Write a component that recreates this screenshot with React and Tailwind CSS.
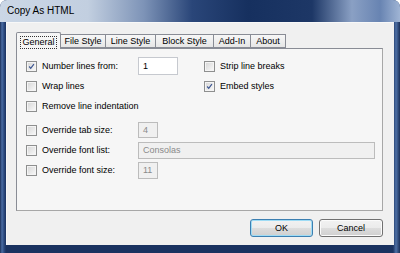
import React from 'react';

const font = { fontFamily: '"Liberation Sans", Arial, sans-serif' };

const Check = ({ checked }) => (
  <div className="w-[11px] h-[11px] shrink-0 border border-[#8e8f8f] bg-[#f4f4f4] p-px">
    <div className="w-full h-full bg-gradient-to-br from-[#d9d9d9] to-[#f6f6f6] flex items-center justify-center">
      {checked && (
        <svg width="9" height="9" viewBox="0 0 9 9">
          <path d="M1.5 4.5 L3.5 6.8 L7.6 1.5" fill="none" stroke="#3b5591" strokeWidth="1.5" />
        </svg>
      )}
    </div>
  </div>
);

const Option = ({ checked, label, className = '' }) => (
  <div className={`flex items-center gap-[5px] ${className}`}>
    <Check checked={checked} />
    <span className="text-[9px] leading-none text-black whitespace-nowrap">{label}</span>
  </div>
);

const Field = ({ value, className, disabled }) => (
  <div
    className={`flex items-center px-[4px] text-[9px] leading-none border ${
      disabled ? 'border-[#bcbcbc] bg-[#f0f0f0] text-[#8a8a8a]' : 'border-[#c6c9cf] bg-white text-black'
    } ${className}`}
  >
    {value}
  </div>
);

const tabs = ['File Style', 'Line Style', 'Block Style', 'Add-In', 'About'];
const tabWidths = ['w-[45px]', 'w-[50px]', 'w-[58px]', 'w-[37px]', 'w-[35px]'];

export default function App() {
  return (
    <div style={font} className="w-[400px] h-[253px] flex flex-col rounded-t-[7px] overflow-hidden bg-[linear-gradient(90deg,#1c3564_0%,#2d4c80_50%,#1c3564_100%)]">
      {/* title bar */}
      <div className="h-[22px] shrink-0 flex items-center pl-[7px] bg-[linear-gradient(90deg,#cbd7e6_0%,#c2cfe0_22%,#7d93b7_36%,#2a4679_48%,#16305f_62%,#1d3766_78%,#8aa0c4_88%,#6884b2_95%,#9fb4d4_100%)]">
        <span className="text-[10px] text-black leading-none">Copy As HTML</span>
      </div>

      {/* client */}
      <div className="flex-1 flex pl-[6px] pr-[7px] pb-[8px] bg-[linear-gradient(90deg,#1b2f58_0px,#4a6da4_2px,#2c4a7f_4px,#1a3260_6px,#1a3260_393px,#4e70a6_396px,#1b2f58_400px)]">
        <div className="flex-1 flex flex-col bg-[#f0f0f0] border-t border-l border-[#f8f8f8] pl-[9px] pr-[11px] pt-[9px]">
          {/* tabs */}
          <div className="h-[17px] -mb-px flex items-end relative z-10">
            <div className="w-[45px] h-[17px] flex items-start justify-center pt-[3px] border border-b-0 border-[#898c95] bg-[#f6f6f6] rounded-t-[2px]">
              <span className="text-[9px] leading-none px-px py-[1px] border border-dotted border-[#333]">General</span>
            </div>
            {tabs.map((t, i) => (
              <div
                key={t}
                className={`${tabWidths[i]} h-[14px] mb-px flex items-center justify-center border border-l-0 border-[#898c95] bg-gradient-to-b from-[#f7f7f7] to-[#e6e6e6] text-[9px] leading-none`}
              >
                {t}
              </div>
            ))}
          </div>

          {/* panel */}
          <div className="w-[367px] h-[163px] border border-[#898c95] border-r-[#a7a7a7] border-b-[#a7a7a7] bg-[#f6f6f6] pl-[9px] pt-[7px] flex flex-col">
            <div className="h-[20px] flex items-center">
              <div className="w-[178px] flex items-center">
                <Option checked label="Number lines from:" className="w-[112px]" />
                <Field value="1" className="w-[40px] h-[18px]" />
              </div>
              <Option label="Strip line breaks" />
            </div>
            <div className="h-[20px] flex items-center">
              <Option label="Wrap lines" className="w-[178px]" />
              <Option checked label="Embed styles" />
            </div>
            <div className="h-[20px] flex items-center">
              <Option label="Remove line indentation" />
            </div>
            <div className="h-[20px] mt-[4px] flex items-center">
              <Option label="Override tab size:" className="w-[112px]" />
              <Field value="4" disabled className="w-[20px] h-[16px]" />
            </div>
            <div className="h-[20px] flex items-center">
              <Option label="Override font list:" className="w-[112px]" />
              <Field value="Consolas" disabled className="w-[237px] h-[17px]" />
            </div>
            <div className="h-[20px] flex items-center">
              <Option label="Override font size:" className="w-[112px]" />
              <Field value="11" disabled className="w-[20px] h-[17px]" />
            </div>
          </div>

          {/* buttons */}
          <div className="flex justify-end gap-[6px] mt-[8px]">
            <button className="w-[63px] h-[18px] rounded-[3px] border border-[#3c7fb1] shadow-[inset_0_0_0_1px_#9fdcf5] bg-[linear-gradient(#f2f2f2_0%,#ebebeb_50%,#dddddd_51%,#cfcfcf_100%)] text-[9px] leading-none text-black">
              OK
            </button>
            <button className="w-[64px] h-[18px] rounded-[3px] border border-[#707070] shadow-[inset_0_0_0_1px_#fbfbfb] bg-[linear-gradient(#f2f2f2_0%,#ebebeb_50%,#dddddd_51%,#cfcfcf_100%)] text-[9px] leading-none text-black">
              Cancel
            </button>
          </div>
        </div>
      </div>
    </div>
  );
}
